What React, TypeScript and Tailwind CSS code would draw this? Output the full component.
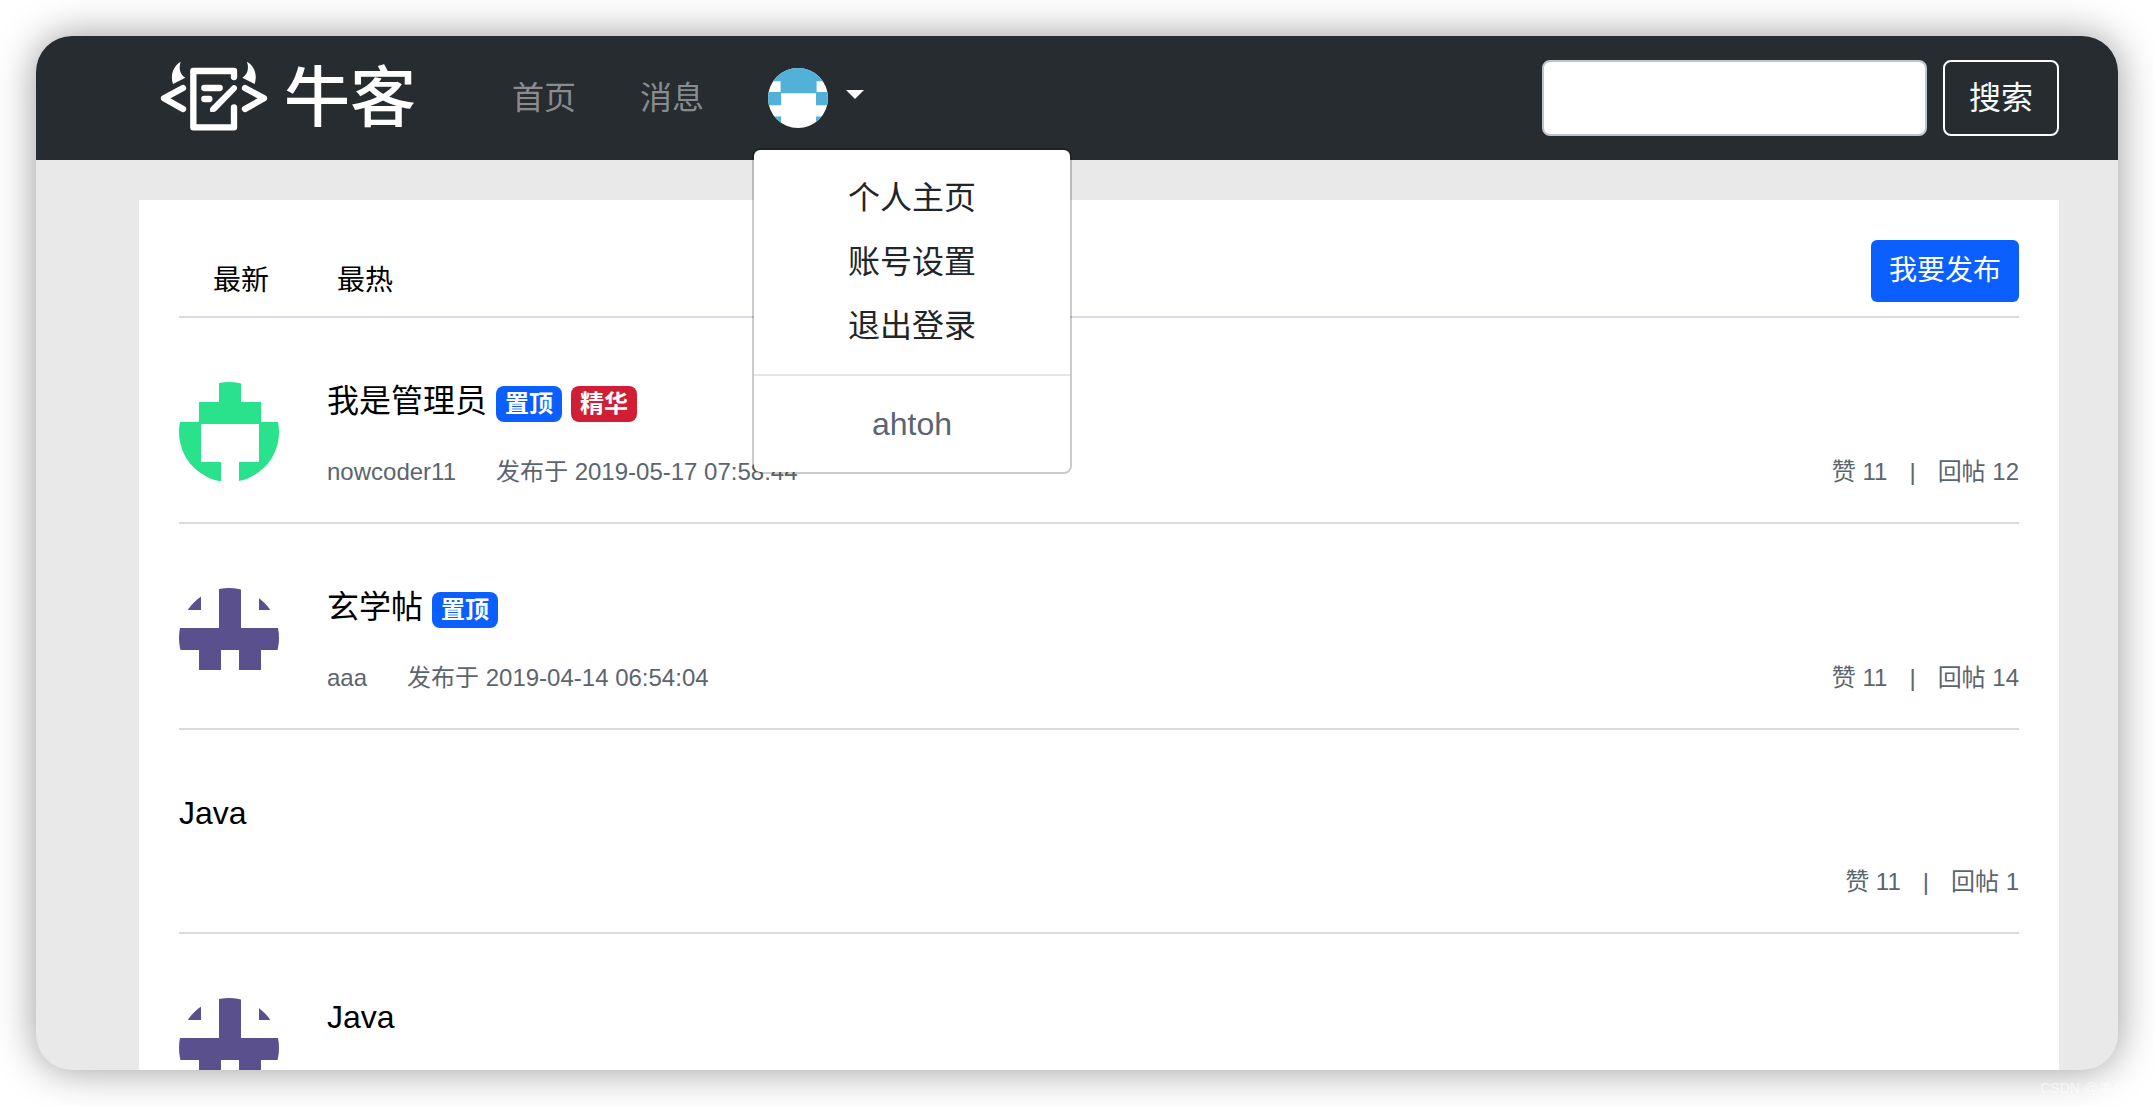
type AvatarKind = "green" | "purple" | "blue";

interface Tag {
  label: string;
  kind: "top" | "best";
}

interface Post {
  id: number;
  title: string;
  avatar?: AvatarKind;
  author?: string;
  time?: string;
  tags: Tag[];
  likes?: number;
  replies?: number;
}

const posts: Post[] = [
  {
    id: 1,
    title: "我是管理员",
    avatar: "green",
    author: "nowcoder11",
    time: "2019-05-17 07:58:44",
    tags: [
      { label: "置顶", kind: "top" },
      { label: "精华", kind: "best" },
    ],
    likes: 11,
    replies: 12,
  },
  {
    id: 2,
    title: "玄学帖",
    avatar: "purple",
    author: "aaa",
    time: "2019-04-14 06:54:04",
    tags: [{ label: "置顶", kind: "top" }],
    likes: 11,
    replies: 14,
  },
  { id: 3, title: "Java", tags: [], likes: 11, replies: 1 },
  { id: 4, title: "Java", avatar: "purple", tags: [] },
];

const avatars: Record<AvatarKind, { color: string; path: string }> = {
  green: {
    color: "#29e28b",
    path: "M40 0H62V20H82V42H20V20H40Z M0 40H22V80H42V100H0Z M80 40H100V100H60V80H80Z",
  },
  purple: {
    color: "#5a508e",
    path: "M0 0H22V22H0Z M80 0H100V22H80Z M40 0H62V40H100V62H82V82H60V62H42V82H20V62H0V40H40Z",
  },
  blue: {
    color: "#51b1d8",
    path: "M0 0H100V22H81V42H21V22H0Z M0 40H22V62H0Z M80 40H100V62H80Z M0 81H22V100H0Z M80 81H100V100H80Z",
  },
};

function Avatar({ kind, className }: { kind: AvatarKind; className: string }) {
  return (
    <svg viewBox="0 0 100 100" className={`shrink-0 rounded-full bg-white ${className}`} aria-hidden="true">
      <path d={avatars[kind].path} fill={avatars[kind].color} />
    </svg>
  );
}

function LogoMark() {
  return (
    <svg viewBox="15 18 324 222" className="h-[74px] w-[108px] shrink-0" fill="none" aria-hidden="true">
      <g stroke="#fff" strokeWidth="19" strokeLinecap="round" strokeLinejoin="round">
        <path d="M237 66V48H115V217H237V157" />
        <path d="M84 99L27 130L84 162" />
        <path d="M270 99L327 130L270 162" />
        <path d="M148 99H194" />
        <path d="M148 132H163" />
      </g>
      <path d="M231 93a9 9 0 0 1 14 11L184 167q-4 4-9 4h-7q-3 0-3-3v-5q0-4 4-8z" fill="#fff" />
      <path d="M77 20C55 32 45 60 54 87L91 68C76 58 70 42 77 20Z" fill="#fff" />
      <path d="M276 20C298 32 308 60 299 87L262 68C277 58 283 42 276 20Z" fill="#fff" />
    </svg>
  );
}

function UserMenu() {
  return (
    <div className="absolute top-full left-0 z-10 mt-3 w-80 rounded-lg border-2 border-black/20 bg-white bg-clip-padding py-4 text-center text-[32px] leading-[48px] text-[#212529]">
      <a href="#profile" className="block py-2">个人主页</a>
      <a href="#setting" className="block py-2">账号设置</a>
      <a href="#logout" className="block py-2">退出登录</a>
      <div className="my-4 h-0.5 bg-[#e3e6ea]" />
      <span className="block py-2 text-[#5b656e]">ahtoh</span>
    </div>
  );
}

function Header() {
  return (
    <header className="flex bg-[#272c30] py-6 pr-[59px] pl-[124px]">
      <a href="#index" className="flex items-center gap-4 text-white">
        <LogoMark />
        <span className="text-[66px] leading-[76px] font-medium">牛客</span>
      </a>

      <ul className="ml-20 flex gap-8 text-[32px] leading-[48px] text-[#898c8e]">
        <li className="flex items-center px-4">
          <a href="#index">首页</a>
        </li>
        <li className="flex items-center px-4">
          <a href="#letter">消息</a>
        </li>
        <li className="relative flex">
          <button type="button" aria-label="ahtoh" className="flex items-center gap-[18px] px-4">
            <Avatar kind="blue" className="size-15" />
            <svg viewBox="0 0 18 9" className="mb-2 h-[9px] w-[18px]" aria-hidden="true">
              <path d="M0 0H18L9 9Z" fill="#fff" />
            </svg>
          </button>
          <UserMenu />
        </li>
      </ul>

      {/* Search */}
      <form className="ml-auto flex gap-4" onSubmit={(e) => e.preventDefault()}>
        <input
          type="search"
          aria-label="搜索"
          className="w-[385px] rounded-lg border-2 border-[#bdc4cb] bg-white px-6 text-[32px]"
        />
        <button type="submit" className="rounded-lg border-2 border-white px-6 text-[32px] leading-[48px] text-[#f8f9fa]">
          搜索
        </button>
      </form>
    </header>
  );
}

function PostItem({ post }: { post: Post }) {
  return (
    <li className="flex items-start gap-12 border-b-2 border-[#d8dce0] pt-16 pb-8">
      {post.avatar && (
        <a href="#profile" aria-label={post.author ?? post.title}>
          <Avatar kind={post.avatar} className="size-[100px]" />
        </a>
      )}
      <div className="flex-1">
        <div className="mb-8 flex items-start gap-[9px]">
          <h2 className="text-[32px] leading-[38px] text-black">
            <a href="#detail">{post.title}</a>
          </h2>
          {post.tags.map((tag) => (
            <span
              key={tag.label}
              className={`mt-1 rounded-lg px-[9px] py-1.5 text-2xl leading-6 font-bold text-white ${
                tag.kind === "top" ? "bg-[#0b5fff]" : "bg-[#d01f35]"
              }`}
            >
              {tag.label}
            </span>
          ))}
        </div>
        <div className="flex text-2xl leading-9 text-[#5b656e]">
          {post.author && <span className="mr-10">{post.author}</span>}
          {post.time && <span>发布于 {post.time}</span>}
          {post.likes !== undefined && (
            <div className="ml-auto flex gap-[22px]">
              <span>赞 {post.likes}</span>
              <span>|</span>
              <span>回帖 {post.replies}</span>
            </div>
          )}
        </div>
      </div>
    </li>
  );
}

export default function App() {
  return (
    <div className="relative flex h-screen bg-white p-9 font-['Liberation_Sans','Noto_Sans_CJK_SC',sans-serif]">
      <div className="flex-1 overflow-hidden rounded-[36px] bg-[#e9e9e9] shadow-[0_0_40px_rgba(0,0,0,0.4)]">
        <Header />

        <main className="pt-10 pr-[59px] pl-[103px]">
          <div className="bg-white px-10 pt-10">
            {/* Tabs */}
            <div className="flex items-start justify-between border-b-2 border-[#d8dce0] pb-3.5 text-[28px] leading-[42px]">
              <nav className="flex gap-[68px] px-[34px] pt-5 text-black">
                <a href="#latest">最新</a>
                <a href="#hottest">最热</a>
              </nav>
              <button type="button" className="rounded-md bg-[#0b5fff] px-[18px] py-2.5 text-white">
                我要发布
              </button>
            </div>

            <ul>
              {posts.map((post) => (
                <PostItem key={post.id} post={post} />
              ))}
            </ul>
          </div>
        </main>
      </div>
      <span className="absolute right-7 bottom-2 text-sm leading-5 text-white/60">CSDN @美夕</span>
    </div>
  );
}
